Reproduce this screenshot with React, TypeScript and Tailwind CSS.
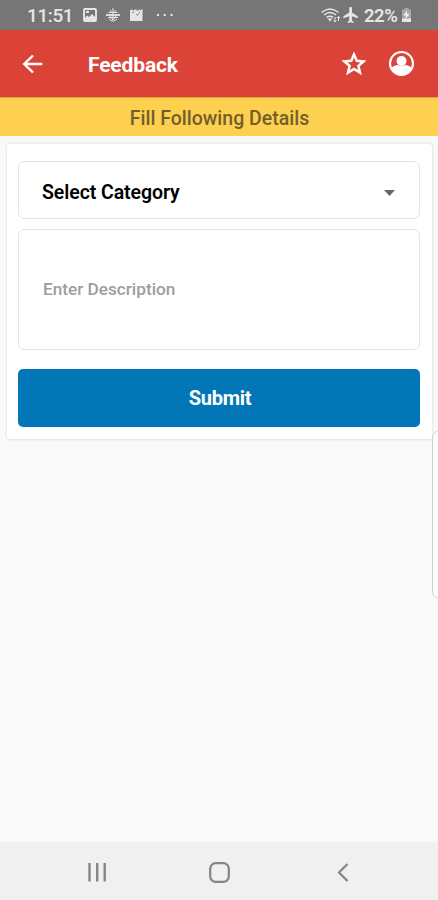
import React from "react";

function StatusBar() {
  return (
    <div className="flex h-[30px] items-center bg-[#767676] pl-[27px] pr-[26px] text-[#e6e6e6]">
      <span className="w-[56px] whitespace-nowrap pt-px text-[19px] font-medium leading-[30px] tracking-[-0.4px]">11:51</span>
      <svg width="14" height="14" viewBox="0 0 14 14" fill="none">
        <rect x="1" y="1" width="12" height="12" rx="1" stroke="currentColor" strokeWidth="1.900" />
        <path d="M1 11 4 7.500 6 9 9 6l4 4v3H1ZM3 3h3v2H3Z" fill="currentColor" />
      </svg>
      <svg className="ml-[9px]" width="14" height="14" viewBox="0 0 14 14" fill="none" stroke="currentColor">
        <path d="M0 7h14" strokeWidth="1.800" />
        <path d="M7 0v14M2.500 4.500 11.500 4.500M2 9.500h10M3 11l3 2M11 11l-3 2M4 2l1.500 2M10 2 8.500 4M4 8l3 4 3-4" strokeWidth="1" />
      </svg>
      <svg className="ml-[9px]" width="15" height="14" viewBox="0 0 15 14">
        <path d="M1 2.500 3.500 1v1.500h2V1.500h2v1h2L11 1v1.500L13.500 1v12H1Z" fill="currentColor" />
        <path d="m7 6 1.500 1.500L11 4M3 4.500h2" fill="none" stroke="#8c8c8c" />
      </svg>
      <svg className="ml-[12px]" width="18" height="4" viewBox="0 0 18 4" fill="currentColor">
        <circle cx="2" cy="2" r="1.200" />
        <circle cx="8.700" cy="2" r="1.200" />
        <circle cx="15.500" cy="2" r="1.200" />
      </svg>
      <svg className="ml-auto" width="20" height="16" viewBox="0 0 20 16" fill="none" stroke="currentColor" strokeWidth="1.400">
        <path d="M.5 5.500Q9 -1.500 17.500 5.500M3 8Q9 3 15 8M5.500 10.500Q9 8 12 10.500" />
        <path d="m6.500 11.500 2.500 3 2.500-3Z" fill="currentColor" stroke="none" />
        <path d="M14 10v5m-1.500-1.500L14 15l1.500-1.500M17.500 14V9.500M16 11l1.500-1.500L19 11" strokeWidth="1" />
      </svg>
      <svg className="ml-[2px]" width="16" height="16" viewBox="2 2 20 20" fill="currentColor">
        <path d="M20.500 16v-2.500l-7.300-4.500V3.500a1.700 1.700 0 0 0-3.400 0V9l-7.300 4.500V16l7.300-2.500V19l-2 1.500V22l3.700-1 3.700 1v-1.500L13.200 19v-5.500z" />
      </svg>
      <span className="ml-[5px] w-[35px] whitespace-nowrap pt-px text-[18.500px] font-semibold leading-[30px] tracking-[-0.500px]">22%</span>
      <svg className="ml-[2px]" width="11" height="15" viewBox="0 0 10 15">
        <path d="M3 0h4v1.500h2.500V14h-9V1.500H3Z" fill="#a9a9a9" />
        <path d="M.5 10.500h9V14h-9Z" fill="currentColor" />
        <path d="M5.500 2.500 2 7.500h2.500L4 11l4-5H5.500Z" fill="#f3f3f3" />
      </svg>
    </div>
  );
}

function AppBar() {
  return (
    <header className="flex h-[67px] items-center bg-[#dc4338] pl-[22px] pr-[23px] text-white">
      <svg width="22" height="20" viewBox="0 0 22 20" fill="none" stroke="currentColor" strokeWidth="2.400">
        <path d="M20.300 10H2M11 1.500 2.200 10l8.800 8.500" />
      </svg>
      <h1 className="ml-[44px] pt-[2px] text-[21px] font-bold leading-[24px] tracking-[-0.150px]">Feedback</h1>
      <svg className="ml-auto" width="26" height="26" viewBox="0 0 26 26" fill="none" stroke="currentColor" strokeWidth="2.500">
        <path d="m13 3.600 2.750 6.250 6.800.6-5.150 4.450 1.550 6.650L13 18l-5.950 3.550L8.600 14.900 3.450 10.450l6.800-.6Z" />
      </svg>
      <svg className="ml-[21px]" width="27" height="27" viewBox="0 0 27 27">
        <circle cx="13.500" cy="13.500" r="11.500" fill="none" stroke="currentColor" strokeWidth="2.100" />
        <circle cx="13.500" cy="11" r="5" fill="currentColor" />
        <path d="M3 18.500c1.500-2 4.200-3.200 7-3.400 2 1.200 5 1.200 7 0 2.800.2 5.500 1.400 7 3.400A11.500 11.500 0 0 1 3 18.500Z" fill="currentColor" />
      </svg>
    </header>
  );
}

function FeedbackForm() {
  return (
    <form className="ml-[7px] mr-[6px] mt-[8px] flex h-[295px] flex-col rounded-[3px] bg-white pl-[11px] pr-[12px] pt-[17px] shadow-[0_0_2px_1px_#e8e8e8,0_1px_1px_0_#e0e0e0]">
      <button type="button" className="flex h-[58px] shrink-0 items-center justify-between rounded-[6px] border border-[#e5e5e5] pl-[23px] pr-[24px] pt-[6px] text-black">
        <span className="whitespace-nowrap text-[19.500px] font-semibold leading-[24px] tracking-[-0.070px]">Select Category</span>
        <svg className="-mt-px" width="11" height="6" viewBox="0 0 11 6" fill="#666">
          <path d="M0 0h11L5.500 6Z" />
        </svg>
      </button>
      <div className="mt-[10px] flex h-[121px] shrink-0 items-center rounded-[6px] border border-[#e5e5e5] pb-[2px] pl-[24px]">
        <span className="whitespace-nowrap text-[17.200px] font-medium leading-[22px] text-[#9d9d9d]">Enter Description</span>
      </div>
      <button type="button" className="mt-[19px] h-[58px] shrink-0 rounded-[5px] bg-[#0276b6] pl-[2px] text-[20px] font-bold tracking-[-0.300px] text-white">
        Submit
      </button>
    </form>
  );
}

function NavigationBar() {
  return (
    <nav className="flex h-[58px] items-center bg-[#f0f0f0] pl-[87px] pr-[89px] pt-[3px] text-[#858585]">
      <svg width="20" height="19" viewBox="0 0 20 19" fill="none" stroke="currentColor" strokeWidth="2.400">
        <path d="M2.500 0v18.500M10.200 0v18.500M17.700 0v18.500" />
      </svg>
      <svg className="ml-[102px]" width="21" height="21" viewBox="0 0 21 21" fill="none" stroke="currentColor" strokeWidth="2.200">
        <rect x="1.200" y="1.200" width="18.600" height="18.600" rx="5.500" />
      </svg>
      <svg className="ml-auto" width="12" height="19" viewBox="0 0 12 19" fill="none" stroke="currentColor" strokeWidth="2.200">
        <path d="M10.500 1 2 9.500l8.500 8.500" />
      </svg>
    </nav>
  );
}

export default function App() {
  return (
    <div className="relative flex h-[900px] w-[438px] flex-col overflow-hidden bg-[#f9f9f9] font-[Roboto,sans-serif]">
      <StatusBar />
      <AppBar />
      <h2 className="h-[39px] border-t border-[#dfa83e] bg-[#fdd04f] pl-[1px] text-center text-[19.500px] font-medium leading-[41px] text-[#735f2c]">
        Fill Following Details
      </h2>
      <main className="flex-1">
        <FeedbackForm />
      </main>
      <NavigationBar />
      <div className="absolute left-[432px] top-[430px] h-[169px] w-[20px] rounded-[8px] border border-[#d2d2d2] bg-white" />
    </div>
  );
}
